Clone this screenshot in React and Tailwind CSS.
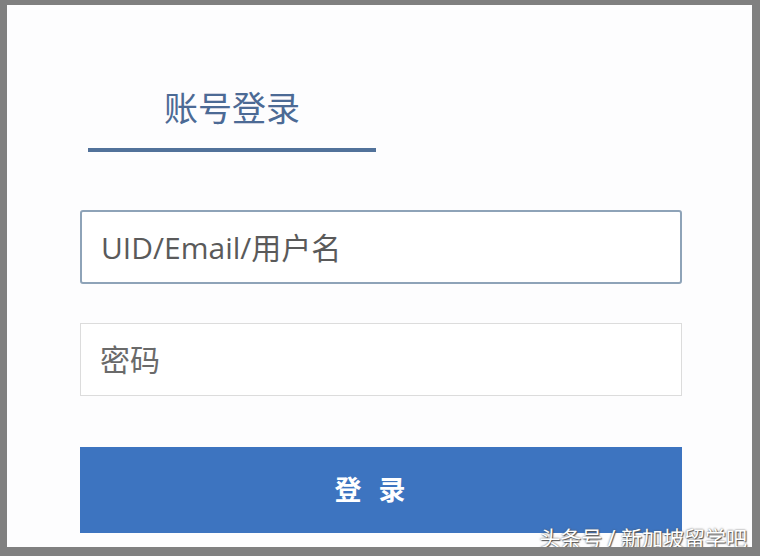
const cjk = { fontFamily: '"Open Sans", "Noto Sans CJK SC", sans-serif' }

export default function App() {
  return (
    <div
      className="relative h-[556px] w-[760px] overflow-hidden border-t-[5px] border-b-[9px] border-l-[7px] border-r-[8px] border-[#808080] bg-[#fdfdfe]"
      style={cjk}
    >
      <div className="flex flex-col">
        {/* tab */}
        <div className="ml-[81px] mt-[80px] flex w-[288px] flex-col items-center">
          <div className="text-[34px] leading-[46px] text-[#4c6a95]">账号登录</div>
          <div className="mt-[17px] h-[4px] w-full bg-[#52729a]" />
        </div>

        {/* inputs */}
        <div className="ml-[73px] mt-[58px] flex w-[602px] flex-col">
          <div className="flex h-[74px] items-center rounded-[3px] border-2 border-[#8ea3b8] bg-white pl-[19px] text-[30px] text-[#5a5a5a]">
            UID/Email/用户名
          </div>
          <div className="mt-[39px] flex h-[73px] items-center border border-[#dcdcdc] bg-white pl-[19px] text-[30px] text-[#6a6a6a]">
            密码
          </div>
          <button className="mt-[51px] flex h-[86px] w-full items-center justify-center bg-[#3d74c0] pr-[22px] text-[27px] font-bold text-white">
            <span>登</span>
            <span className="ml-[17px]">录</span>
          </button>
        </div>
      </div>

      <div
        className="absolute bottom-[-5px] right-[5px] text-[21px] leading-[28px] text-white"
        style={{ textShadow: '0 0 2px #555, 1px 1px 1px #555' }}
      >
        头条号 / 新加坡留学吧
      </div>
    </div>
  )
}
